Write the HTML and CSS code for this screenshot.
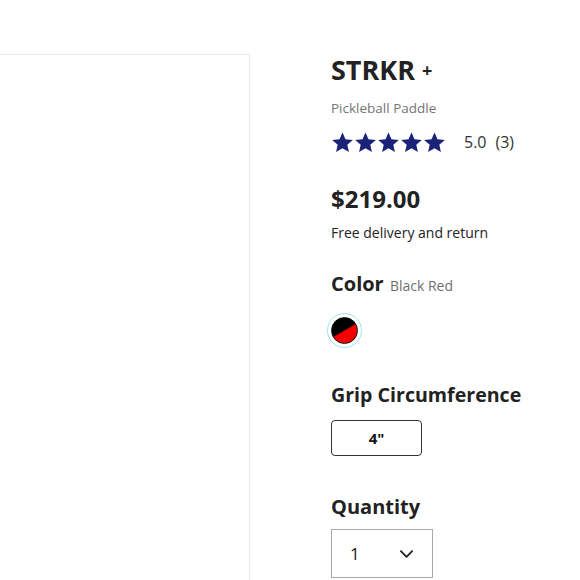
FILE: index.html
```html
<!DOCTYPE html>
<html>
<head>
<meta charset="utf-8">
<link rel="stylesheet" href="styles.css">
</head>
<body>
<div class="page">
  <div class="gallery"></div>
  <div class="info">
    <h1 class="title">STRKR <span class="plus">+</span></h1>
    <div class="subtitle">Pickleball Paddle</div>
    <div class="rating">
      <div class="stars">
        <svg viewBox="0 0 24 24" class="star"><path d="M12 1.5l3.1 7.1 7.7.7-5.8 5.1 1.7 7.6L12 18l-6.7 4 1.7-7.6L1.2 9.3l7.7-.7z"/></svg>
        <svg viewBox="0 0 24 24" class="star"><path d="M12 1.5l3.1 7.1 7.7.7-5.8 5.1 1.7 7.6L12 18l-6.7 4 1.7-7.6L1.2 9.3l7.7-.7z"/></svg>
        <svg viewBox="0 0 24 24" class="star"><path d="M12 1.5l3.1 7.1 7.7.7-5.8 5.1 1.7 7.6L12 18l-6.7 4 1.7-7.6L1.2 9.3l7.7-.7z"/></svg>
        <svg viewBox="0 0 24 24" class="star"><path d="M12 1.5l3.1 7.1 7.7.7-5.8 5.1 1.7 7.6L12 18l-6.7 4 1.7-7.6L1.2 9.3l7.7-.7z"/></svg>
        <svg viewBox="0 0 24 24" class="star"><path d="M12 1.5l3.1 7.1 7.7.7-5.8 5.1 1.7 7.6L12 18l-6.7 4 1.7-7.6L1.2 9.3l7.7-.7z"/></svg>
      </div>
      <span class="score">5.0</span>
      <span class="count">(3)</span>
    </div>
    <div class="price">$219.00</div>
    <div class="delivery">Free delivery and return</div>
    <div class="label color-label">Color <span class="sub">Black Red</span></div>
    <div class="swatch-row">
      <div class="swatch"><span class="swatch-inner"></span></div>
    </div>
    <div class="label grip-label">Grip Circumference</div>
    <button class="size">4"</button>
    <div class="label qty-label">Quantity</div>
    <div class="qty">
      <span class="qty-val">1</span>
      <svg class="chev" viewBox="0 0 16 10"><path d="M2 2l6 6 6-6" fill="none" stroke="#222" stroke-width="2" stroke-linecap="round" stroke-linejoin="round"/></svg>
    </div>
  </div>
</div>
</body>
</html>
```
FILE: styles.css
```css
html, body {
  margin: 0;
  padding: 0;
  background: #fff;
  height: 100%;
  overflow: hidden;
}
body {
  font-family: "Open Sans", "Lato", sans-serif;
  color: #222;
}
.page {
  display: flex;
  height: 100%;
}
.gallery {
  width: 252px;
  margin-left: -2px;
  margin-top: 54px;
  border: 1px solid #e6e6e6;
  border-bottom: none;
  box-sizing: border-box;
  flex: none;
  height: 600px;
}
.info {
  padding-left: 81px;
  padding-top: 52px;
  display: flex;
  flex-direction: column;
  align-items: flex-start;
}
.title {
  margin: 0;
  font-size: 27px;
  font-weight: 700;
  line-height: 36px;
  color: #222;
}
.plus {
  font-size: 18px;
  vertical-align: 3px;
}
.subtitle {
  margin-top: 11px;
  font-size: 13.5px;
  line-height: 18px;
  color: #757575;
}
.rating {
  margin-top: 13px;
  display: flex;
  align-items: center;
  height: 24px;
}
.stars {
  display: flex;
}
.star {
  width: 23px;
  height: 23px;
  fill: #1b2379;
}
.score {
  margin-left: 18px;
  font-size: 16px;
  color: #333;
}
.count {
  margin-left: 9px;
  font-size: 16px;
  color: #333;
}
.price {
  margin-top: 30px;
  font-size: 24px;
  font-weight: 700;
  line-height: 30px;
}
.delivery {
  margin-top: 10px;
  font-size: 14px;
  line-height: 18px;
  color: #222;
}
.label {
  font-size: 20px;
  font-weight: 700;
  line-height: 26px;
}
.color-label {
  margin-top: 29px;
}
.sub {
  font-size: 14px;
  font-weight: 400;
  color: #6f6f6f;
  margin-left: 1px;
}
.swatch-row {
  margin-top: 14px;
  margin-left: -4px;
}
.swatch {
  width: 35px;
  height: 35px;
  border-radius: 50%;
  border: 1px solid #9fe3ec;
  box-sizing: border-box;
  display: flex;
  align-items: center;
  justify-content: center;
}
.swatch-inner {
  width: 27px;
  height: 27px;
  border-radius: 50%;
  border: 1px solid #111;
  box-sizing: border-box;
  background: linear-gradient(150deg, #000 0 48%, #f40000 52% 100%);
}
.grip-label {
  margin-top: 34px;
  font-size: 19.6px;
}
.size {
  margin-top: 12px;
  width: 91px;
  height: 36px;
  border: 1px solid #333;
  border-radius: 4px;
  background: #fff;
  font-family: inherit;
  font-weight: 700;
  font-size: 15px;
  color: #111;
  padding: 0;
}
.qty-label {
  margin-top: 38px;
}
.qty {
  margin-top: 9px;
  width: 102px;
  height: 49px;
  border: 1px solid #a8a8a8;
  box-sizing: border-box;
  display: flex;
  align-items: center;
  padding-left: 18px;
  padding-right: 18px;
  justify-content: space-between;
}
.qty-val {
  font-size: 17px;
}
.chev {
  width: 15px;
  height: 10px;
}
```
